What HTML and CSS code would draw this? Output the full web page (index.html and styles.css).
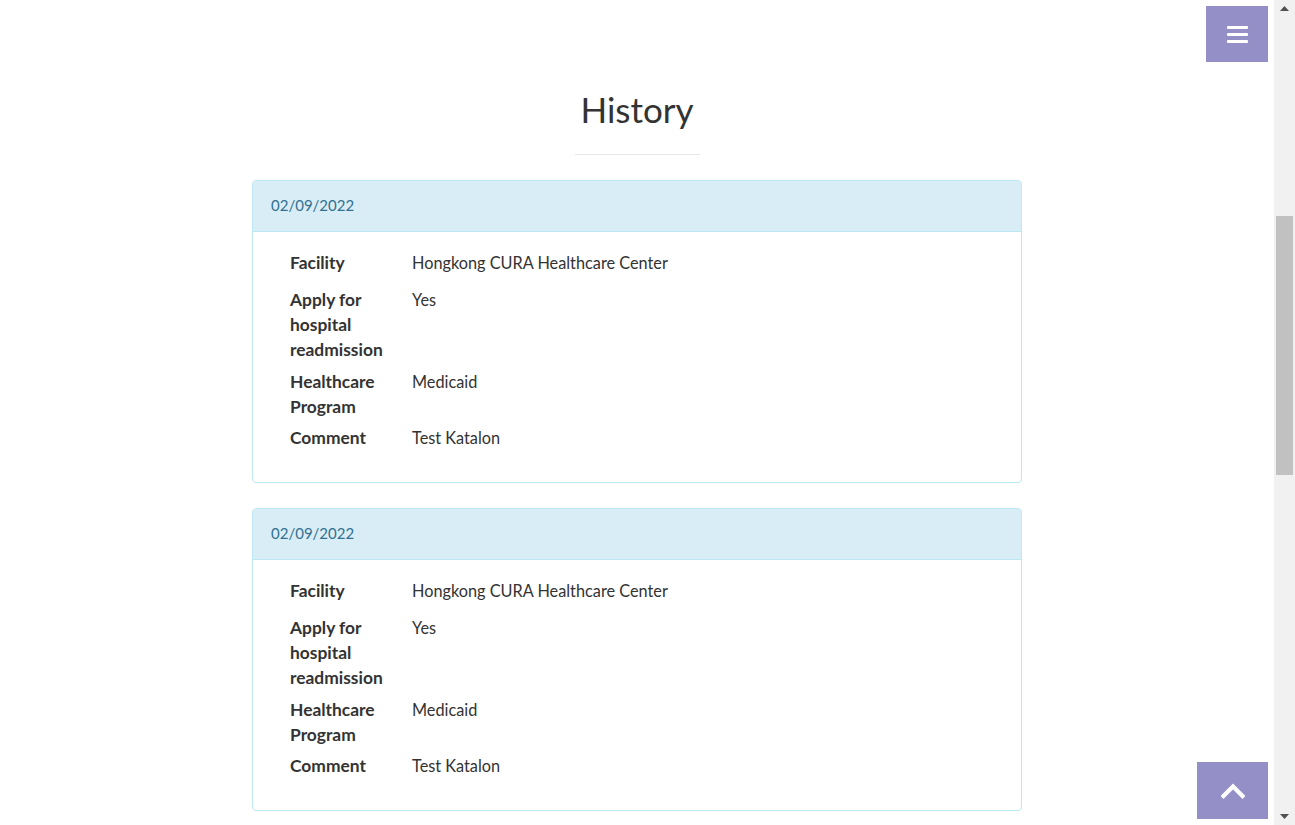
FILE: index.html
```html
<!DOCTYPE html>
<html lang="en">
<head>
<meta charset="utf-8">
<title>History</title>
<link rel="stylesheet" href="styles.css">
</head>
<body>
<div class="page">
  <section class="history">
    <h2 class="title">History</h2>
    <hr class="title-rule">
    <div class="panel">
      <div class="panel-heading">02/09/2022</div>
      <div class="panel-body">
        <div class="row"><div class="label">Facility</div><div class="value">Hongkong CURA Healthcare Center</div></div>
        <div class="row"><div class="label">Apply for hospital readmission</div><div class="value">Yes</div></div>
        <div class="row"><div class="label">Healthcare Program</div><div class="value">Medicaid</div></div>
        <div class="row"><div class="label">Comment</div><div class="value">Test Katalon</div></div>
      </div>
    </div>
    <div class="panel">
      <div class="panel-heading">02/09/2022</div>
      <div class="panel-body">
        <div class="row"><div class="label">Facility</div><div class="value">Hongkong CURA Healthcare Center</div></div>
        <div class="row"><div class="label">Apply for hospital readmission</div><div class="value">Yes</div></div>
        <div class="row"><div class="label">Healthcare Program</div><div class="value">Medicaid</div></div>
        <div class="row"><div class="label">Comment</div><div class="value">Test Katalon</div></div>
      </div>
    </div>
  </section>
</div>
<div class="scrollbar">
  <div class="sb-btn"><svg width="9" height="5" viewBox="0 0 9 5"><path d="M0 5 L4.5 0 L9 5 Z" fill="#505050"/></svg></div>
  <div class="sb-track"><div class="sb-thumb"></div></div>
  <div class="sb-btn"><svg width="9" height="5" viewBox="0 0 9 5"><path d="M0 0 L4.5 5 L9 0 Z" fill="#505050"/></svg></div>
</div>
<a class="menu-toggle" href="#">
  <svg width="21" height="17" viewBox="0 0 21 17"><rect x="0" y="0" width="21" height="3" rx="1" fill="#fff"/><rect x="0" y="7" width="21" height="3" rx="1" fill="#fff"/><rect x="0" y="14" width="21" height="3" rx="1" fill="#fff"/></svg>
</a>
<a class="to-top" href="#">
  <svg width="24" height="16" viewBox="0 0 24 16"><polyline points="2.5,13 12,3.5 21.5,13" fill="none" stroke="#fff" stroke-width="4.2" stroke-linejoin="miter" stroke-linecap="square"/></svg>
</a>
</body>
</html>
```
FILE: styles.css
```css
html, body {
  margin: 0;
  padding: 0;
  height: 100%;
  overflow: hidden;
}
body {
  display: flex;
  font-family: Lato, "Open Sans", sans-serif;
  font-size: 16.3px;
  line-height: 25px;
  color: #333;
  background: #fff;
}
.page {
  flex: 1;
  min-width: 0;
}
.history {
  width: 770px;
  margin: 0 auto;
  padding-top: 87px;
}
.title {
  margin: 0;
  text-align: center;
  font-size: 35px;
  line-height: 44px;
  font-weight: 400;
  color: #333;
}
.title-rule {
  width: 125px;
  margin: 23px auto 25px;
  border: 0;
  border-top: 1px solid #e6e6e6;
}
.panel {
  border: 1px solid #bce8f1;
  border-radius: 4px;
  margin-bottom: 25px;
  background: #fff;
}
.panel-heading {
  background: #d9edf7;
  color: #31708f;
  padding: 12px 18px 13px;
  border-bottom: 1px solid #bce8f1;
  border-radius: 3px 3px 0 0;
  font-size: 15px;
}
.panel-body {
  padding: 18px 15px 20px 37px;
}
.row {
  display: flex;
  align-items: flex-start;
}
.label {
  width: 122px;
  flex: none;
  font-size: 17.4px;
  font-weight: 700;
  margin-bottom: 6.5px;
  padding-right: 8px;
  box-sizing: border-box;
}
.value {
  margin-bottom: 12px;
}
.scrollbar {
  width: 21px;
  flex: none;
  background: #f1f1f1;
  display: flex;
  flex-direction: column;
}
.sb-btn {
  height: 17px;
  display: flex;
  align-items: center;
  justify-content: center;
  flex: none;
}
.sb-track {
  flex: 1;
  padding: 0 2px;
}
.sb-thumb {
  margin-top: 199px;
  height: 259px;
  background: #c1c1c1;
}
.menu-toggle {
  position: fixed;
  top: 6px;
  right: 27px;
  width: 62px;
  height: 56px;
  background: #9490c7;
  display: flex;
  align-items: center;
  justify-content: center;
}
.to-top {
  position: fixed;
  bottom: 6px;
  right: 27px;
  width: 71px;
  height: 57px;
  background: #9490c7;
  display: flex;
  align-items: center;
  justify-content: center;
}
```
